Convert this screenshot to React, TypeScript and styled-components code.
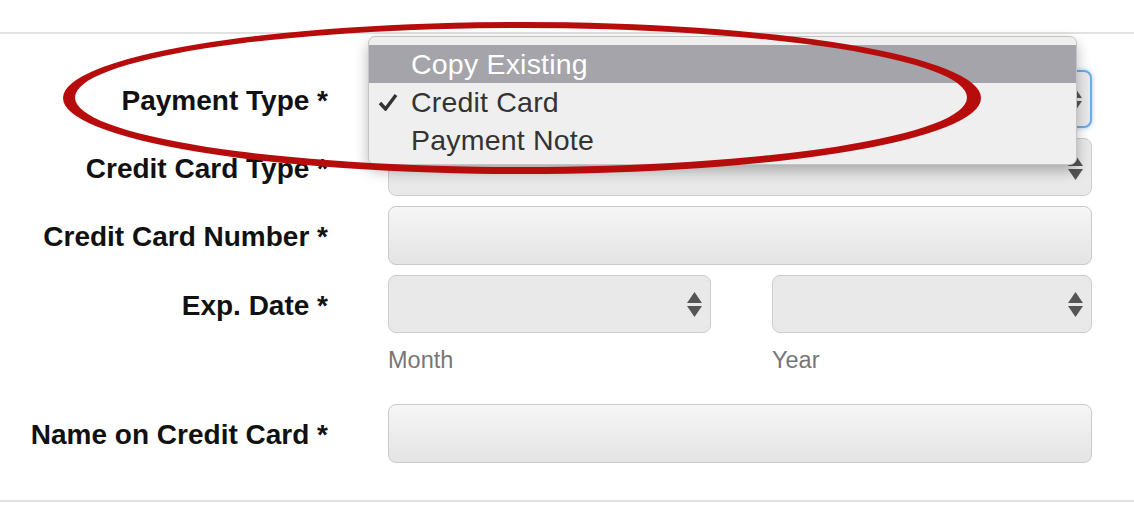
import React from 'react';
import styled, { createGlobalStyle } from 'styled-components';

const GlobalStyle = createGlobalStyle`
  html, body {
    margin: 0;
    padding: 0;
    background: #ffffff;
  }

  body {
    font-family: "Liberation Sans", Arial, Helvetica, sans-serif;
  }
`;

const paymentOptions = [
  { label: 'Copy Existing', highlighted: true, checked: false },
  { label: 'Credit Card', highlighted: false, checked: true },
  { label: 'Payment Note', highlighted: false, checked: false },
];

function Stepper() {
  return (
    <svg width="15" height="25" viewBox="0 0 15 25">
      <polygon points="7.5,0 15,11 0,11" fill="#555" />
      <polygon points="0,14 15,14 7.5,25" fill="#555" />
    </svg>
  );
}

function CheckMark() {
  return (
    <svg width="20" height="18" viewBox="0 0 20 18">
      <path d="M2 10 L7.5 16 L18 2" fill="none" stroke="#333" strokeWidth="3.4" strokeLinejoin="miter" />
    </svg>
  );
}

function Ellipse() {
  const ring = (cx: number, cy: number, rx: number, ry: number) =>
    `M${cx - rx} ${cy} a${rx} ${ry} 0 1 0 ${rx * 2} 0 a${rx} ${ry} 0 1 0 ${-rx * 2} 0 Z`;

  return (
    <Annotation width="1134" height="200" viewBox="0 0 1134 200">
      <path
        d={`${ring(522, 98, 459, 76)} ${ring(521, 97.5, 446, 69.5)}`}
        fill="#b70c0c"
        fillRule="evenodd"
      />
    </Annotation>
  );
}

export default function App() {
  return (
    <Page>
      <GlobalStyle />

      <Form>
        <Row>
          <Label>Payment Type *</Label>
          <SelectBox focused>
            <Stepper />
            <Menu>
              {paymentOptions.map((option) => (
                <MenuItem key={option.label} highlighted={option.highlighted}>
                  <CheckSlot>{option.checked && <CheckMark />}</CheckSlot>
                  {option.label}
                </MenuItem>
              ))}
            </Menu>
          </SelectBox>
        </Row>

        <Row>
          <Label>Credit Card Type *</Label>
          <SelectBox>
            <Stepper />
          </SelectBox>
        </Row>

        <Row>
          <Label>Credit Card Number *</Label>
          <TextBox />
        </Row>

        <Row>
          <Label>Exp. Date *</Label>
          <SplitFields>
            <SelectBox>
              <Stepper />
            </SelectBox>
            <SelectBox>
              <Stepper />
            </SelectBox>
          </SplitFields>
        </Row>

        <HelpRow>
          <span />
          <SplitFields>
            <HelpText>Month</HelpText>
            <HelpText>Year</HelpText>
          </SplitFields>
        </HelpRow>

        <Row spaced>
          <Label>Name on Credit Card *</Label>
          <TextBox />
        </Row>
      </Form>

      <Ellipse />
    </Page>
  );
}

const Page = styled.div`
  position: relative;
  width: 1134px;
  height: 520px;
  padding-top: 32px;
  box-sizing: border-box;
  overflow: hidden;
`;

const Form = styled.div`
  display: flex;
  flex-direction: column;
  gap: 10px;

  padding: 36px 0 37px;
  border-top: 2px solid #e2e2e2;
  border-bottom: 2px solid #e2e2e2;
`;

const Row = styled.div<{ spaced?: boolean }>`
  display: grid;
  grid-template-columns: 328px 704px;
  column-gap: 60px;
  align-items: center;

  margin-top: ${(p) => (p.spaced ? '21px' : '0')};
`;

const HelpRow = styled(Row)`
  padding-top: 4px;
`;

const Label = styled.div`
  padding-top: 3px;
  text-align: right;
  font-size: 28px;
  font-weight: bold;
  color: #111;
  white-space: nowrap;
`;

const SplitFields = styled.div`
  display: grid;
  grid-template-columns: 323px 320px;
  column-gap: 61px;
`;

const SelectBox = styled.div<{ focused?: boolean }>`
  position: relative;
  height: 58px;
  box-sizing: border-box;

  display: flex;
  align-items: center;
  justify-content: flex-end;
  padding-right: 8px;

  background: #e9e9e9;
  border: ${(p) => (p.focused ? '2px solid #6caae8' : '1.5px solid #cdcdcd')};
  border-radius: 8px;
  box-shadow: ${(p) => (p.focused ? '0 0 5px rgba(90, 160, 235, 0.55)' : 'none')};
`;

const TextBox = styled.div`
  height: 59px;
  box-sizing: border-box;

  background: linear-gradient(#f6f6f6, #e4e4e4);
  border: 1.5px solid #cacaca;
  border-radius: 8px;
`;

const HelpText = styled.div`
  font-size: 23.5px;
  line-height: 26px;
  color: #777;
`;

const Menu = styled.div`
  position: absolute;
  left: -22px;
  top: -36px;
  width: 709px;
  height: 129px;
  box-sizing: border-box;
  padding-top: 8px;
  z-index: 2;

  background: #efefef;
  border: 1px solid #c4c4c4;
  border-radius: 7px;
  box-shadow: 0 6px 14px rgba(0, 0, 0, 0.28);
`;

const MenuItem = styled.div<{ highlighted?: boolean }>`
  display: flex;
  align-items: center;
  height: 38px;

  font-family: "Liberation Sans", Helvetica, Arial, sans-serif;
  font-size: 28.5px;
  letter-spacing: 0.2px;
  color: ${(p) => (p.highlighted ? '#ffffff' : '#333333')};
  background: ${(p) => (p.highlighted ? '#a4a4aa' : 'transparent')};
`;

const CheckSlot = styled.span`
  display: flex;
  align-items: center;
  width: 42px;
  padding-left: 9px;
  box-sizing: border-box;
`;

const Annotation = styled.svg`
  position: absolute;
  left: 0;
  top: 0;
  z-index: 5;
  pointer-events: none;
`;
